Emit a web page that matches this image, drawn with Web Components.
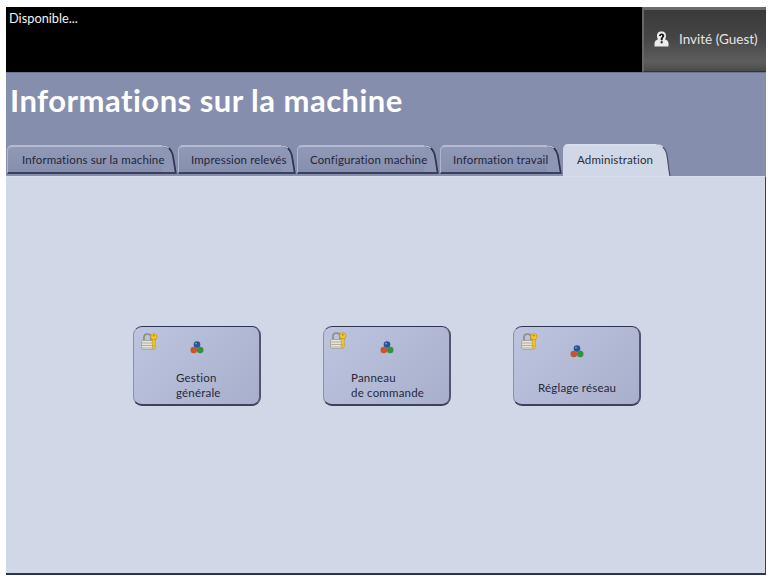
<!DOCTYPE html>
<html lang="fr"><head><meta charset="utf-8"><title>Informations sur la machine</title>
<style>
html,body{margin:0;background:#fff}
body{width:770px;height:576px;overflow:hidden;box-sizing:border-box;padding:7px 4px 0 6px;font-family:"Lato","Noto Sans",sans-serif}
</style></head><body>
<app-shell>
  <status-bar slot="status" message="Disponible..." user="Invité (Guest)"></status-bar>
  <title-band slot="band" title-text="Informations sur la machine">
    <tab-item w="170" gap="1" pad="14">Informations sur la machine</tab-item>
    <tab-item w="118" gap="1" pad="12">Impression relevés</tab-item>
    <tab-item w="142" gap="1" pad="12">Configuration machine</tab-item>
    <tab-item w="122" gap="1" pad="12">Information travail</tab-item>
    <tab-item w="108" active pad="13">Administration</tab-item>
  </title-band>
  <main-panel slot="panel">
    <tile-button icon-x="56" icon-y="14" lock-x="7" lock-y="6" label-x="42" label-y="16">Gestion<br>générale</tile-button>
    <tile-button icon-x="56" icon-y="14" lock-x="6" lock-y="5" label-x="27" label-y="16">Panneau<br>de commande</tile-button>
    <tile-button icon-x="56" icon-y="18" lock-x="7" lock-y="6" label-x="24" label-y="22">Réglage réseau</tile-button>
  </main-panel>
</app-shell>
<script>
const el=(html)=>{const t=document.createElement('template');t.innerHTML=html;return t.content};
class AppShell extends HTMLElement{constructor(){super();this.attachShadow({mode:'open'}).append(el(`
<style>:host{display:flex;flex-direction:column;width:760px;height:568px}
::slotted([slot=panel]){flex:1}</style>
<slot name="status"></slot><slot name="band"></slot><slot name="panel"></slot>`))}}
class StatusBar extends HTMLElement{connectedCallback(){if(this.shadowRoot)return;this.attachShadow({mode:'open'}).append(el(`
<style>:host{display:flex;justify-content:space-between;height:65px;background:#000;color:#fff}
.msg{font-size:12.800px;line-height:14px;padding:4px 0 0 3px;color:#f2f2f2}
.user{box-sizing:border-box;width:124px;height:65px;margin-left:auto;display:flex;align-items:center;gap:10px;padding:0 0 4px 10px;
background:linear-gradient(#3a3a3a,#454545 45%,#5e5e5e 85%,#4a4a4a);border-top:3px solid #6b6b6b;border-left:2px solid #666;border-bottom:1px solid #333;color:#e4e4e4;font-size:13.500px;white-space:nowrap}
svg{flex:none}</style>
<div class="msg">${this.getAttribute('message')}</div>
<div class="user"><svg width="15" height="16" viewBox="0 0 15 16"><path d="M7.500 .5C10.800 .5 12 2.500 12 5C12 6.500 11.500 7.500 11 8.200C13 9 14.500 10 14.500 12.500V15.500H.5V12.500C.5 10 2 9 4 8.200C3.500 7.500 3 6.500 3 5C3 2.500 4.200 .5 7.500 .5Z" fill="#ececec"/><path d="M5 5C5.100 3.300 6.200 2.400 7.600 2.400C9.200 2.400 10.300 3.300 10.300 4.800C10.300 6.500 8.600 6.700 8.600 8.400V9.200H6.700V8C6.700 6.200 8.300 5.900 8.300 4.900C8.300 4.400 8 4.100 7.500 4.100C7 4.100 6.800 4.500 6.800 5.200ZM6.700 10.200H8.600V12.200H6.700Z" fill="#111"/></svg><span>${this.getAttribute('user')}</span></div>`))}}
class TitleBand extends HTMLElement{connectedCallback(){if(this.shadowRoot)return;this.attachShadow({mode:'open'}).append(el(`
<style>:host{display:flex;flex-direction:column;height:104px;background:#868eae;border-top:1px solid #6d7592;box-sizing:border-box}
h1{margin:0;font:700 31px/36px "Lato","Noto Sans",sans-serif;color:#fff;padding:9px 0 0 4px;height:50px;white-space:nowrap;letter-spacing:.47px}
.tabs{display:flex;align-items:flex-end;padding-left:1px;height:32px;margin-top:auto}</style>
<h1>${this.getAttribute('title-text')}</h1><div class="tabs"><slot></slot></div>`))}}
class TabItem extends HTMLElement{connectedCallback(){if(this.shadowRoot)return;const a=this.hasAttribute('active');const w=+this.getAttribute('w');const g=+(this.getAttribute('gap')||0);const p=this.getAttribute('pad')||15;
const H=a?32:29;const fill=a?'#d0d7e6':'#8e96b5';const top=a?'#d8deeb':'#b4bad0';const edge=a?'#4a5068':'#2e3350';
const curve=`M0 1C6 1 8 3 10.500 9C12 15 12.500 ${H-7} 14 ${H}`;
this.attachShadow({mode:'open'}).append(el(`
<style>:host{display:flex;flex:none;width:${w}px;margin-right:${g}px;height:${H}px;margin-bottom:${a?0:2}px}
.b{position:relative;z-index:1;flex:1;min-width:0;box-sizing:border-box;background:${a?fill:'linear-gradient(#9199b8,#878fae)'};border-top:2px solid ${top};border-left:1px solid ${a?fill:'#b0b6cc'};border-top-left-radius:5px;${a?'':'border-bottom:2px solid #3a3f5c;'}
font-size:11.500px;line-height:${a?27:25}px;color:${a?'#2a2d3a':'#23263a'};padding-left:${p}px;white-space:nowrap;letter-spacing:.14px}
svg{flex:none;display:block}</style>
<div class="b"><slot></slot></div>
<svg width="15" height="${H}" viewBox="0 0 15 ${H}"><path d="${curve}H0Z" fill="${fill}"/><path d="${curve}" fill="none" stroke="${edge}" stroke-width="${a?1.200:1.700}"/><path d="M0 1C3 1 5 1.300 7 3" fill="none" stroke="${top}" stroke-width="1.600"/>${a?'':`<path d="M0 ${H-1}H14" stroke="#3a3f5c" stroke-width="2"/>`}</svg>`))}}
class MainPanel extends HTMLElement{constructor(){super();this.attachShadow({mode:'open'}).append(el(`
<style>:host{display:flex;justify-content:flex-start;align-items:flex-start;gap:62px;box-sizing:border-box;padding:149px 0 0 128px;background:#d0d7e6;border-bottom:2px solid #2e3350;border-right:1px solid #3a3f55;border-top:1px solid #d8deeb}</style><slot></slot>`))}}
class TileButton extends HTMLElement{connectedCallback(){if(this.shadowRoot)return;const n=k=>+this.getAttribute(k);
this.attachShadow({mode:'open'}).append(el(`
<style>:host{position:relative;display:block;flex:none;width:128px;height:80px;margin-left:-1px;margin-right:1px;box-sizing:border-box;border-radius:9px;border:1px solid #8b91a8;border-top:1.500px solid #2f3550;border-bottom:2.500px solid #3c425e;border-right:2px solid #50566f;background:linear-gradient(135deg,#bcc4de,#b2bad6 50%,#a7afcc);font-size:11.500px;line-height:15px;color:#26293a;letter-spacing:.2px}
.lock{position:absolute;left:${n('lock-x')}px;top:${n('lock-y')}px}
.icon{display:block;margin:${n('icon-y')}px 0 0 ${n('icon-x')}px}
.l{margin:${n('label-y')}px 0 0 ${n('label-x')}px;white-space:nowrap}</style>
<svg class="lock" width="17" height="17" viewBox="0 0 17 17"><path d="M3 8V4.500C3 2 4.800 1 6.500 1C8.200 1 10 2 10 4.500V8" fill="none" stroke="#8d8d85" stroke-width="1.700"/><rect x=".5" y="7.500" width="12.500" height="9" rx="1.200" fill="#e6e4d8" stroke="#9a9a90" stroke-width=".7"/><path d="M1 10H13M1 12.500H13M1 15H13" stroke="#a9a89e" stroke-width=".9"/><circle cx="12.800" cy="3.800" r="3.200" fill="#f2c62d" stroke="#b78f12" stroke-width=".6"/><circle cx="12.800" cy="2.700" r=".8" fill="#8a6e12"/><path d="M11.300 6.500H14.300V14.500L12.800 16.500 11.300 15V13.500H12.300V12.500H11.300Z" fill="#f2c62d" stroke="#b78f12" stroke-width=".5"/></svg>
<svg class="icon" width="14" height="13" viewBox="0 0 14 13"><circle cx="7" cy="3.600" r="3.300" fill="#27549f"/><circle cx="3.800" cy="9" r="3.300" fill="#c5552b"/><circle cx="10.200" cy="9" r="3.300" fill="#36903e"/><circle cx="6" cy="2.600" r=".9" fill="#7fa4e0"/></svg>
<div class="l"><slot></slot></div>`))}}
customElements.define('app-shell',AppShell);customElements.define('status-bar',StatusBar);customElements.define('title-band',TitleBand);customElements.define('tab-item',TabItem);customElements.define('main-panel',MainPanel);customElements.define('tile-button',TileButton);
</script>
</body></html>
